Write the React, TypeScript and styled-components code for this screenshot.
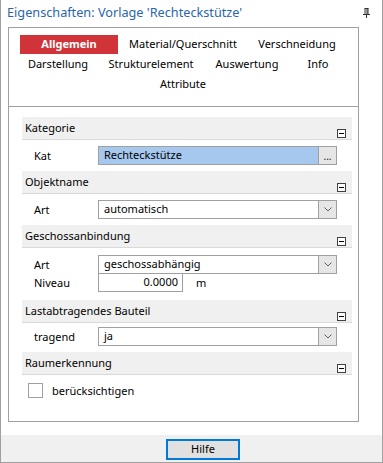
import React from "react";
import styled, { createGlobalStyle } from "styled-components";

const Global = createGlobalStyle`
  html, body { margin: 0; padding: 0; background: #fff; }
  body { font-family: "Noto Sans", "Open Sans", sans-serif; font-size: 11px; color: #000; }
  * { box-sizing: border-box; }
`;

const Window = styled.div`
  width: 383px;
  height: 463px;
  border: 1px solid #a0a0a0;
  border-top: none;
  display: flex;
  flex-direction: column;
  background: #fff;
`;

const TitleBar = styled.div`
  height: 27px;
  display: flex;
  align-items: flex-start;
  justify-content: space-between;
  padding: 2px 12px 0 6px;
`;

const TitleText = styled.div`
  font-size: 12.7px;
  line-height: 20px;
  color: #2a66ac;
`;

const Pin = styled.svg`
  margin-top: 6px;
`;

const Body = styled.div`
  flex: 1;
  padding: 0 23px 13px 7px;
  display: flex;
`;

const Panel = styled.div`
  flex: 1;
  border: 1px solid #a0a0a0;
  display: flex;
  flex-direction: column;
`;

const TabArea = styled.div`
  padding: 7px 0 11px;
  border-bottom: 1px solid #a0a0a0;
  display: flex;
  flex-direction: column;
`;

const TabRow = styled.div<{ $start: number }>`
  height: 20px;
  display: flex;
  padding-left: ${(p) => p.$start}px;
`;

const Tab = styled.div<{ $w: number; $active?: boolean }>`
  width: ${(p) => p.$w}px;
  height: 19px;
  line-height: 18px;
  text-align: center;
  white-space: nowrap;
  background: ${(p) => (p.$active ? "#d13438" : "transparent")};
  color: ${(p) => (p.$active ? "#fff" : "#000")};
  font-weight: ${(p) => (p.$active ? 700 : 400)};
`;

const Grid = styled.div`
  padding: 10px 6px 0 13px;
  display: flex;
  flex-direction: column;
`;

const Section = styled.div``;

const SectionHeader = styled.div`
  height: 23px;
  background: #f0f0f0;
  border-bottom: 1px solid #d9d9d9;
  display: flex;
  align-items: flex-start;
  justify-content: space-between;
  padding: 2px 6px 0 3px;
  line-height: 18px;
`;

const Collapse = styled.div`
  width: 9px;
  height: 9px;
  margin-top: 10px;
  border: 1px solid #404040;
  background: #fff;
  display: flex;
  align-items: center;
  justify-content: center;
  &::after {
    content: "";
    width: 5px;
    height: 1px;
    background: #000;
  }
`;

const SectionBody = styled.div<{ $pt: number; $pb: number }>`
  padding: ${(p) => p.$pt}px 15px ${(p) => p.$pb}px 0;
  display: flex;
  flex-direction: column;
`;

const Row = styled.div<{ $overlap?: boolean }>`
  display: flex;
  align-items: center;
  height: 19px;
  margin-top: ${(p) => (p.$overlap ? "-1px" : "0")};
`;

const Label = styled.div`
  width: 76px;
  padding-left: 12px;
  line-height: 18px;
`;

const Field = styled.div<{ $fill?: string; $w?: number }>`
  ${(p) => (p.$w ? `width: ${p.$w}px;` : "flex: 1;")}
  height: 19px;
  border: 1px solid #a0a0a0;
  background: ${(p) => p.$fill || "#fff"};
  display: flex;
  align-items: stretch;
`;

const FieldText = styled.div<{ $right?: boolean }>`
  flex: 1;
  padding: 0 4px 0 5px;
  line-height: 16px;
  text-align: ${(p) => (p.$right ? "right" : "left")};
`;

const FieldButton = styled.div`
  width: 18px;
  border-left: 1px solid #a0a0a0;
  background: #e6e6e6;
  display: flex;
  align-items: center;
  justify-content: center;
  font-size: 10px;
  line-height: 12px;
  color: #222;
`;

const Unit = styled.div`
  margin-left: 13px;
  line-height: 18px;
`;

const CheckRow = styled.div`
  display: flex;
  align-items: center;
  height: 19px;
  padding-left: 6px;
`;

const CheckBox = styled.div`
  width: 15px;
  height: 15px;
  border: 1px solid #a0a0a0;
  background: #fff;
  margin-right: 9px;
`;

const Footer = styled.div`
  height: 27px;
  background: #f0f0f0;
  display: flex;
  align-items: flex-start;
  padding: 4px 0 0 165px;
`;

const HelpButton = styled.div`
  width: 74px;
  height: 21px;
  border: 2px solid #0078d7;
  background: #e1e1e1;
  text-align: center;
  line-height: 16px;
`;

const Chevron = () => (
  <svg width="8" height="5" viewBox="0 0 8 5">
    <path d="M0.5 0.5 L4 4 L7.5 0.5" fill="none" stroke="#606060" strokeWidth="1" />
  </svg>
);

type Sec = {
  title: string;
  pt: number;
  pb: number;
  children: React.ReactNode;
};

const PropSection = ({ title, pt, pb, children }: Sec) => (
  <Section>
    <SectionHeader>
      <span>{title}</span>
      <Collapse />
    </SectionHeader>
    <SectionBody $pt={pt} $pb={pb}>
      {children}
    </SectionBody>
  </Section>
);

export default function App() {
  return (
    <>
      <Global />
      <Window>
        <TitleBar>
          <TitleText>Eigenschaften: Vorlage 'Rechteckstütze'</TitleText>
          <Pin width="7" height="10" viewBox="0 0 7 10">
            <path d="M1.5 0.5 H5.5 M2 0.5 V6 M4 0.5 V6 M5 0.5 V6 M0 6.5 H7 M3.5 6.5 V10" stroke="#333" strokeWidth="1" fill="none" />
          </Pin>
        </TitleBar>
        <Body>
          <Panel>
            <TabArea>
              <TabRow $start={11}>
                <Tab $w={98} $active>Allgemein</Tab>
                <Tab $w={130}>Material/Querschnitt</Tab>
                <Tab $w={98}>Verschneidung</Tab>
              </TabRow>
              <TabRow $start={9}>
                <Tab $w={80}>Darstellung</Tab>
                <Tab $w={106}>Strukturelement</Tab>
                <Tab $w={86}>Auswertung</Tab>
                <Tab $w={56}>Info</Tab>
              </TabRow>
              <TabRow $start={134}>
                <Tab $w={80}>Attribute</Tab>
              </TabRow>
            </TabArea>
            <Grid>
              <PropSection title="Kategorie" pt={6} pb={6}>
                <Row>
                  <Label>Kat</Label>
                  <Field $fill="#a6c8ee">
                    <FieldText>Rechteckstütze</FieldText>
                    <FieldButton>...</FieldButton>
                  </Field>
                </Row>
              </PropSection>
              <PropSection title="Objektname" pt={6} pb={6}>
                <Row>
                  <Label>Art</Label>
                  <Field>
                    <FieldText>automatisch</FieldText>
                    <FieldButton><Chevron /></FieldButton>
                  </Field>
                </Row>
              </PropSection>
              <PropSection title="Geschossanbindung" pt={7} pb={8}>
                <Row>
                  <Label>Art</Label>
                  <Field>
                    <FieldText>geschossabhängig</FieldText>
                    <FieldButton><Chevron /></FieldButton>
                  </Field>
                </Row>
                <Row $overlap>
                  <Label>Niveau</Label>
                  <Field $w={85}>
                    <FieldText $right>0.0000</FieldText>
                  </Field>
                  <Unit>m</Unit>
                </Row>
              </PropSection>
              <PropSection title="Lastabtragendes Bauteil" pt={4} pb={6}>
                <Row>
                  <Label>tragend</Label>
                  <Field>
                    <FieldText>ja</FieldText>
                    <FieldButton><Chevron /></FieldButton>
                  </Field>
                </Row>
              </PropSection>
              <PropSection title="Raumerkennung" pt={6} pb={6}>
                <CheckRow>
                  <CheckBox />
                  <span>berücksichtigen</span>
                </CheckRow>
              </PropSection>
            </Grid>
          </Panel>
        </Body>
        <Footer>
          <HelpButton>Hilfe</HelpButton>
        </Footer>
      </Window>
    </>
  );
}
